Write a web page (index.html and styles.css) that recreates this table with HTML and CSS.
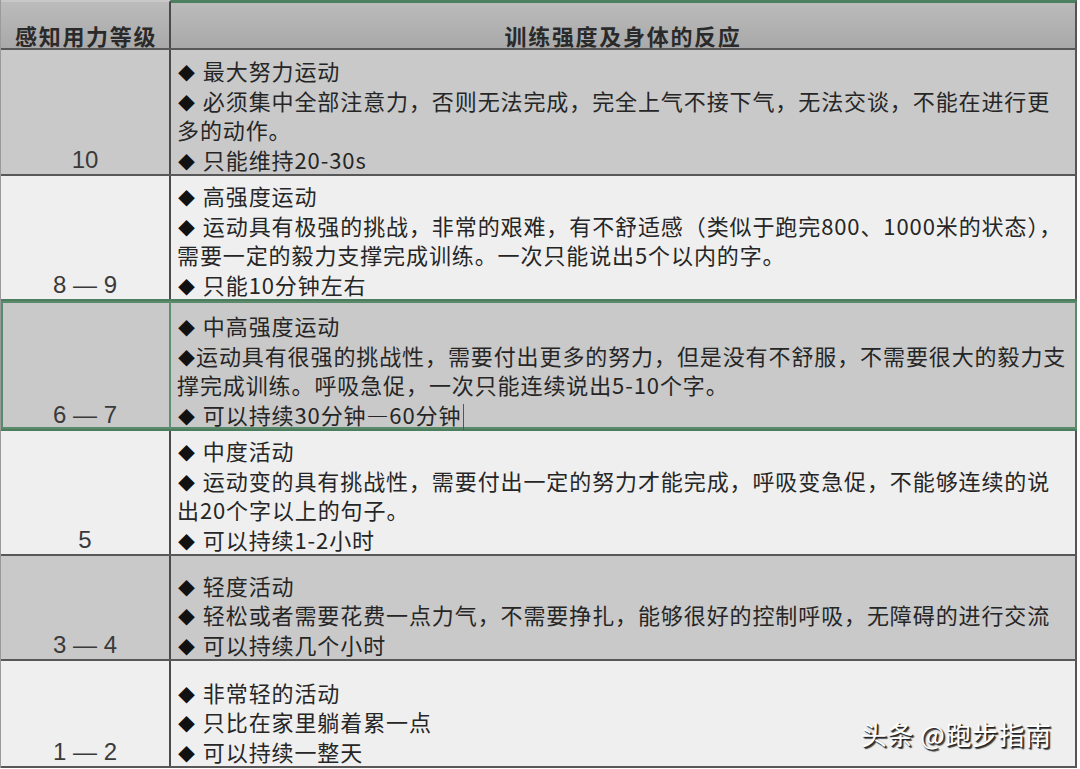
FILE: index.html
```html
<!DOCTYPE html>
<html lang="zh">
<head>
<meta charset="utf-8">
<link rel="stylesheet" href="styles.css">
</head>
<body>
<div class="sheet">
  <div class="row head">
    <div class="cell lvl">感知用力等级</div>
    <div class="cell desc">训练强度及身体的反应</div>
  </div>
  <div class="row gray r10">
    <div class="cell lvl">10</div>
    <div class="cell desc">
      <div class="ln"><span class="d">◆</span> 最大努力运动</div>
      <div class="ln"><span class="d">◆</span> 必须集中全部注意力，否则无法完成，完全上气不接下气，无法交谈，不能在进行更</div>
      <div class="ln">多的动作。</div>
      <div class="ln"><span class="d">◆</span> 只能维持20-30s</div>
    </div>
  </div>
  <div class="row light r89">
    <div class="cell lvl">8 — 9</div>
    <div class="cell desc">
      <div class="ln"><span class="d">◆</span> 高强度运动</div>
      <div class="ln"><span class="d">◆</span> 运动具有极强的挑战，非常的艰难，有不舒适感（类似于跑完800、1000米的状态），</div>
      <div class="ln">需要一定的毅力支撑完成训练。一次只能说出5个以内的字。</div>
      <div class="ln"><span class="d">◆</span> 只能10分钟左右</div>
    </div>
  </div>
  <div class="row gray sel r67">
    <div class="cell lvl">6 — 7</div>
    <div class="cell desc">
      <div class="ln"><span class="d">◆</span> 中高强度运动</div>
      <div class="ln"><span class="d tight">◆</span>运动具有很强的挑战性，需要付出更多的努力，但是没有不舒服，不需要很大的毅力支</div>
      <div class="ln">撑完成训练。呼吸急促，一次只能连续说出5-10个字。</div>
      <div class="ln"><span class="d">◆</span> 可以持续30分钟—60分钟<span class="caret"></span></div>
    </div>
  </div>
  <div class="row light r5">
    <div class="cell lvl">5</div>
    <div class="cell desc">
      <div class="ln"><span class="d">◆</span> 中度活动</div>
      <div class="ln"><span class="d">◆</span> 运动变的具有挑战性，需要付出一定的努力才能完成，呼吸变急促，不能够连续的说</div>
      <div class="ln">出20个字以上的句子。</div>
      <div class="ln"><span class="d">◆</span> 可以持续1-2小时</div>
    </div>
  </div>
  <div class="row gray r34">
    <div class="cell lvl">3 — 4</div>
    <div class="cell desc">
      <div class="ln"><span class="d">◆</span> 轻度活动</div>
      <div class="ln"><span class="d">◆</span> 轻松或者需要花费一点力气，不需要挣扎，能够很好的控制呼吸，无障碍的进行交流</div>
      <div class="ln"><span class="d">◆</span> 可以持续几个小时</div>
    </div>
  </div>
  <div class="row light r12">
    <div class="cell lvl">1 — 2</div>
    <div class="cell desc">
      <div class="ln"><span class="d">◆</span> 非常轻的活动</div>
      <div class="ln"><span class="d">◆</span> 只比在家里躺着累一点</div>
      <div class="ln"><span class="d">◆</span> 可以持续一整天</div>
    </div>
  </div>
  <div class="watermark">头条 @跑步指南</div>
</div>
</body>
</html>
```
FILE: styles.css
```css
html, body {
  margin: 0;
  padding: 0;
  background: #ffffff;
}
body {
  width: 1080px;
  height: 769px;
  overflow: hidden;
  font-family: "Noto Sans CJK SC", "Noto Sans", sans-serif;
  color: #262626;
}
.sheet {
  position: relative;
  width: 1077px;
  display: flex;
  flex-direction: column;
  border-left: 1px solid #9a9a9a;
  box-sizing: border-box;
}
.row {
  display: grid;
  grid-template-columns: 170px 1fr;
  border-bottom: 2px solid #585858;
  box-sizing: border-box;
}
.gray { background: #c9c9c9; }
.light { background: #efefef; }
.head {
  height: 50px;
  background: linear-gradient(#bcbcbc, #a9a9a9);
}
.r10 { height: 126px; }
.r89 { height: 125px; }
.r67 { height: 130px; }
.r5 { height: 125px; }
.r34 { height: 105px; }
.r12 { height: 107px; }

.cell {
  display: flex;
  flex-direction: column;
  justify-content: flex-end;
  box-sizing: border-box;
  min-width: 0;
}
.lvl {
  border-right: 2px solid #4a4a4a;
  align-items: center;
  font-family: "Liberation Sans", Arial, sans-serif;
  font-size: 24px;
  line-height: 29.5px;
  color: #3a3a3a;
}
.desc {
  padding-left: 6px;
  border-right: 2px solid #555;
  font-size: 22px;
  letter-spacing: 0.9px;
  line-height: 29.5px;
}
.ln {
  white-space: nowrap;
  height: 29.5px;
}
.d {
  display: inline-block;
  font-size: 17px;
  line-height: 17px;
  width: 19px;
  margin-left: 1px;
  letter-spacing: 0;
  color: #111;
  vertical-align: baseline;
}
.d.tight {
  width: 17px;
  margin-right: 1px;
}
.head .cell {
  font-weight: 700;
  font-size: 22px;
  letter-spacing: 1.7px;
  line-height: 26px;
  padding-bottom: 0;
  color: #2a2a2a;
  font-family: "Noto Sans CJK SC", sans-serif;
}
.head .lvl {
  align-items: flex-start;
  padding-left: 14px;
  border-top: 2px solid #c8c8c8;
}
.head .desc {
  align-items: center;
  padding-left: 0;
  border-top: 3px solid #4d8060;
}
.sel {
  box-shadow: inset 0 0 0 2px #5a8a6c;
  border-bottom-color: #4d7d5f;
  margin-top: -2px;
  height: 132px;
  border-top: 2px solid #4d7d5f;
}
.sel .lvl { border-right-color: #5f8f70; }
.sel .desc { border-right-color: #5a8a6c; }
.caret {
  display: inline-block;
  width: 1px;
  height: 26px;
  background: #555;
  vertical-align: -6px;
  margin-left: 2px;
}
.watermark {
  position: absolute;
  left: 860px;
  top: 715px;
  font-size: 26px;
  letter-spacing: 0.5px;
  color: #ffffff;
  text-shadow: 1px 1px 1px #1a1a1a, 2px 2px 1px #444;
  white-space: nowrap;
}
```
